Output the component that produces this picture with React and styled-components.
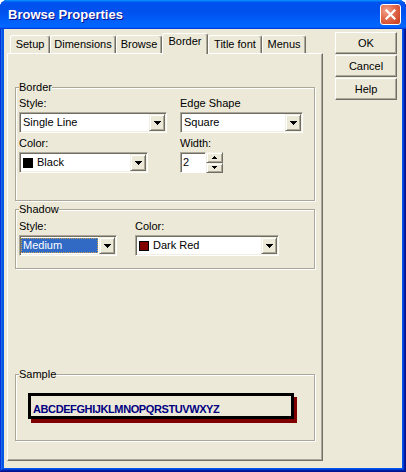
import React from 'react';
import styled, { createGlobalStyle, css } from 'styled-components';

const GlobalStyle = createGlobalStyle`
  body {
    margin: 0;
    background: #fff;
  }
  * {
    box-sizing: border-box;
  }
`;

// Window chrome
const Frame = styled.div`
  width: 406px;
  height: 472px;
  display: flex;
  flex-direction: column;
  padding: 0 4px 4px 4px;
  background: #0055ea;
  border-radius: 8px 8px 0 0;
  box-shadow: inset -1px -1px #00138c, inset 1px 1px #0831d9, inset -2px -2px #001ea0,
    inset 2px 2px #166aee, inset -3px -3px #003bda, inset 3px 3px #0855dd;
`;

const TitleBar = styled.div`
  height: 29px;
  margin: 0 -4px;
  padding: 0 5px 0 8px;
  display: flex;
  align-items: center;
  justify-content: space-between;
  border-radius: 7px 7px 0 0;
  background: linear-gradient(180deg, #0997ff, #0053ee 8%, #0050ee 40%, #06f 88%, #06f 93%, #005bff 95%, #003dd7 96%, #003dd7);
`;

const Title = styled.span`
  font: bold 13px 'Liberation Sans', Arial, sans-serif;
  color: #fff;
  text-shadow: 1px 1px #0f1089;
`;

const CloseButton = styled.div`
  width: 21px;
  height: 21px;
  display: flex;
  align-items: center;
  justify-content: center;
  border: 1px solid #fff;
  border-radius: 3px;
  background: radial-gradient(circle at 30% 30%, #f0a48c 0%, #e2684a 45%, #d1492c 80%, #c13e22 100%);
`;

const Client = styled.div`
  flex: 1;
  display: flex;
  align-items: flex-start;
  gap: 12px;
  padding: 4px 0 0 3px;
  background: #ece9d8;
  font: 11px/13px 'Liberation Sans', Tahoma, Arial, sans-serif;
  color: #000;
`;

// Tabs
const TabControl = styled.div`
  width: 316px;
  display: flex;
  flex-direction: column;
`;

const TabStrip = styled.div`
  height: 20px;
  display: flex;
  align-items: flex-end;
  padding-left: 3px;
  position: relative;
  z-index: 1;
`;

const Tab = styled.div`
  width: ${(p) => p.$w}px;
  height: 18px;
  padding-top: 2px;
  text-align: center;
  background: #ece9d8;
  border-top: 1px solid #fff;
  border-left: 1px solid #fff;
  border-right: 1px solid #716f64;
  border-radius: 3px 3px 0 0;
  box-shadow: inset -1px 0 #aca899;
  white-space: nowrap;

  ${(p) =>
    p.$active &&
    css`
      height: 21px;
      margin-bottom: -1px;
      padding-top: 1px;
    `}
`;

const Panel = styled.div`
  height: 408px;
  display: flex;
  flex-direction: column;
  padding: 27px 0 19px 7px;
  border: 1px solid;
  border-color: #fff #716f64 #716f64 #fff;
  box-shadow: inset -1px -1px #aca899;
`;

// Group boxes
const Group = styled.fieldset`
  width: 300px;
  margin: ${(p) => p.$margin || '0'};
  padding: ${(p) => p.$pad};
  border: 1px solid #aca899;
  box-shadow: inset 1px 1px #fff, 1px 1px #fff;
  min-width: 0;
`;

const Legend = styled.legend`
  padding: 0;
  background: #ece9d8;
  line-height: 13px;
`;

const FieldGrid = styled.div`
  display: grid;
  grid-template-columns: ${(p) => p.$cols};
  row-gap: 4px;
`;

const Field = styled.div`
  display: flex;
  flex-direction: column;
  gap: 2px;
`;

const Label = styled.div`
  padding-left: 0;
`;

// Combo box
const ComboBox = styled.div`
  width: ${(p) => p.$w}px;
  height: 21px;
  display: flex;
  padding: 1px;
  background: #fff;
  border: 1px solid;
  border-color: #aca899 #fff #fff #aca899;
  box-shadow: inset 1px 1px #716f64, inset -1px -1px #f1efe2;
`;

const ComboValue = styled.div`
  flex: 1;
  display: flex;
  align-items: center;
  gap: 4px;
  margin: 1px 1px 1px 0;
  padding-left: 1px;
  border: 1px solid transparent;
  white-space: nowrap;

  ${(p) =>
    p.$focused &&
    css`
      background: #316ac5;
      color: #fff;
      border: 1px dotted #c9a24a;
    `}
`;

const Swatch = styled.span`
  width: 10px;
  height: 10px;
  background: ${(p) => p.$color};
  border: 1px solid #000;
`;

const RaisedButton = styled.div`
  display: flex;
  align-items: center;
  justify-content: center;
  background: #ece9d8;
  border: 1px solid;
  border-color: #f1efe2 #716f64 #716f64 #f1efe2;
  box-shadow: inset 1px 1px #fff, inset -1px -1px #aca899;
`;

const DropButton = styled(RaisedButton)`
  width: 16px;
`;

// Spin edit
const SpinWrap = styled.div`
  display: flex;
  height: 21px;
`;

const SpinEdit = styled.div`
  width: 26px;
  display: flex;
  align-items: center;
  padding-left: 2px;
  background: #fff;
  border: 1px solid;
  border-color: #aca899 #fff #fff #aca899;
  box-shadow: inset 1px 1px #716f64;
`;

const SpinButtons = styled.div`
  width: 17px;
  display: flex;
  flex-direction: column;
`;

const SpinButton = styled(RaisedButton)`
  flex: 1;
`;

// Sample
const SampleBox = styled.div`
  width: 266px;
  height: 26px;
  margin: 12px 0 0 9px;
  padding: 7px 0 0 2px;
  border: 3px solid #000;
  box-shadow: 3px 4px 0 #800000;
  font: bold 11px/13px 'Liberation Sans', Arial, sans-serif;
  color: #000080;
  letter-spacing: -0.4px;
`;

// Dialog buttons
const ButtonColumn = styled.div`
  width: 62px;
  display: flex;
  flex-direction: column;
  gap: 1px;
  margin-top: -1px;
`;

const DialogButton = styled.div`
  height: 22px;
  display: flex;
  align-items: center;
  justify-content: center;
  background: #ece9d8;
  border: 1px solid;
  border-color: #fff #716f64 #716f64 #fff;
  box-shadow: inset -1px -1px #aca899;
`;

const Arrow = ({ up, small }) =>
  small ? (
    <svg width="5" height="3" viewBox="0 0 5 3">
      {up ? (
        <path d="M2 0h1v1H2zM1 1h3v1H1zM0 2h5v1H0z" fill="#000" />
      ) : (
        <path d="M0 0h5v1H0zM1 1h3v1H1zM2 2h1v1H2z" fill="#000" />
      )}
    </svg>
  ) : (
    <svg width="7" height="4" viewBox="0 0 7 4">
      <path d="M0 0h7v1H0zM1 1h5v1H1zM2 2h3v1H2zM3 3h1v1H3z" fill="#000" />
    </svg>
  );

const Combo = ({ width, value, swatch, focused }) => (
  <ComboBox $w={width}>
    <ComboValue $focused={focused}>
      {swatch && <Swatch $color={swatch} />}
      {value}
    </ComboValue>
    <DropButton>
      <Arrow />
    </DropButton>
  </ComboBox>
);

const tabs = [
  { label: 'Setup', w: 40 },
  { label: 'Dimensions', w: 66 },
  { label: 'Browse', w: 46 },
  { label: 'Border', w: 46, active: true },
  { label: 'Title font', w: 54 },
  { label: 'Menus', w: 44 },
];

const App = () => (
  <>
    <GlobalStyle />
    <Frame>
      <TitleBar>
        <Title>Browse Properties</Title>
        <CloseButton>
          <svg width="11" height="11" viewBox="0 0 11 11">
            <path d="M1.5 1.5l8 8M9.5 1.5l-8 8" stroke="#fff" strokeWidth="2.2" strokeLinecap="square" />
          </svg>
        </CloseButton>
      </TitleBar>
      <Client>
        <TabControl>
          <TabStrip>
            {tabs.map((t) => (
              <Tab key={t.label} $w={t.w} $active={t.active}>
                {t.label}
              </Tab>
            ))}
          </TabStrip>
          <Panel>
            <Group $pad="3px 0 27px 3px">
              <Legend>Border</Legend>
              <FieldGrid $cols="161px 1fr">
                <Field>
                  <Label>Style:</Label>
                  <Combo width={148} value="Single Line" />
                </Field>
                <Field>
                  <Label>Edge Shape</Label>
                  <Combo width={123} value="Square" />
                </Field>
                <Field>
                  <Label>Color:</Label>
                  <Combo width={129} value="Black" swatch="#000" />
                </Field>
                <Field>
                  <Label>Width:</Label>
                  <SpinWrap>
                    <SpinEdit>2</SpinEdit>
                    <SpinButtons>
                      <SpinButton>
                        <Arrow up small />
                      </SpinButton>
                      <SpinButton>
                        <Arrow small />
                      </SpinButton>
                    </SpinButtons>
                  </SpinWrap>
                </Field>
              </FieldGrid>
            </Group>

            <Group $pad="4px 0 12px 3px" $margin="2px 0 0 0">
              <Legend>Shadow</Legend>
              <FieldGrid $cols="116px 1fr">
                <Field>
                  <Label>Style:</Label>
                  <Combo width={98} value="Medium" focused />
                </Field>
                <Field>
                  <Label>Color:</Label>
                  <Combo width={144} value="Dark Red" swatch="#800000" />
                </Field>
              </FieldGrid>
            </Group>

            <Group $pad="0 0 21px 3px" $margin="auto 0 0 0">
              <Legend>Sample</Legend>
              <SampleBox>ABCDEFGHIJKLMNOPQRSTUVWXYZ</SampleBox>
            </Group>
          </Panel>
        </TabControl>

        <ButtonColumn>
          <DialogButton>OK</DialogButton>
          <DialogButton>Cancel</DialogButton>
          <DialogButton>Help</DialogButton>
        </ButtonColumn>
      </Client>
    </Frame>
  </>
);

export default App;
